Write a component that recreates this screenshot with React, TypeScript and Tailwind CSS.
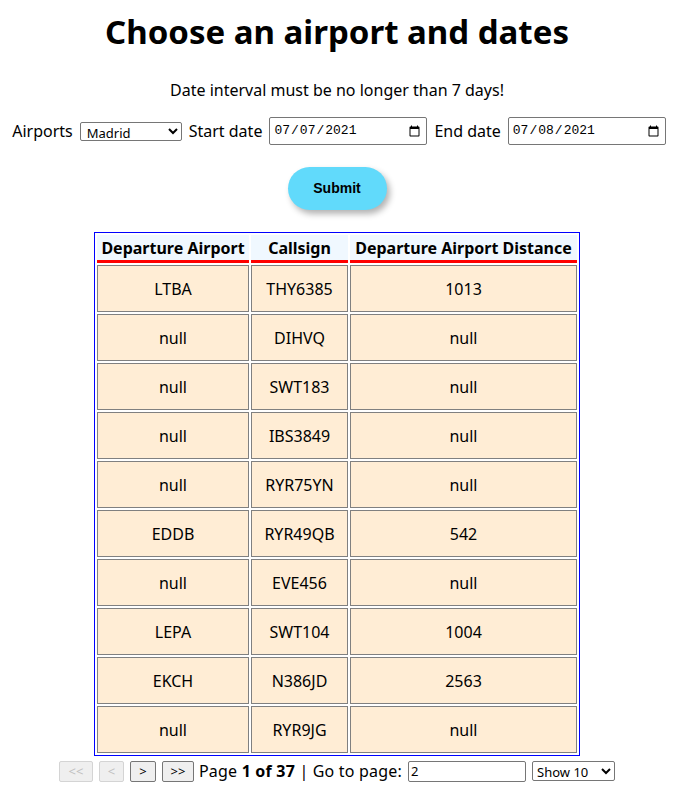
import React from "react";

const rows: [string, string, string][] = [
  ["LTBA", "THY6385", "1013"],
  ["null", "DIHVQ", "null"],
  ["null", "SWT183", "null"],
  ["null", "IBS3849", "null"],
  ["null", "RYR75YN", "null"],
  ["EDDB", "RYR49QB", "542"],
  ["null", "EVE456", "null"],
  ["LEPA", "SWT104", "1004"],
  ["EKCH", "N386JD", "2563"],
  ["null", "RYR9JG", "null"],
];

export default function App() {
  return (
    <div className="w-[698px] min-h-[807px] bg-white text-black text-[16px]" style={{ fontFamily: '"Noto Sans", sans-serif' }}>
      <h1 className="text-center font-bold text-[33px] leading-[38px] pt-[13px] pr-[24px]">Choose an airport and dates</h1>
      <p className="text-center text-[16px] leading-[20px] mt-[29px] pr-[24px]">Date interval must be no longer than 7 days!</p>
      <div className="flex items-center justify-center gap-[7px] mt-[17px] pr-[20px] h-[28px]">
        <span>Airports</span>
        <select className="w-[102px] h-[19px] border border-[#767676] rounded-[2px] text-[13px] pl-[2px] bg-white" style={{ fontFamily: '"Noto Sans", sans-serif' }} defaultValue="Madrid">
          <option>Madrid</option>
        </select>
        <span>Start date</span>
        <input type="date" defaultValue="2021-07-07" className="w-[158px] h-[28px] border border-[#767676] rounded-[2px] text-[13px] px-[3px]" style={{ fontFamily: '"Liberation Mono", monospace' }} />
        <span>End date</span>
        <input type="date" defaultValue="2021-07-08" className="w-[158px] h-[28px] border border-[#767676] rounded-[2px] text-[13px] px-[3px]" style={{ fontFamily: '"Liberation Mono", monospace' }} />
      </div>
      <div className="flex justify-center mt-[22px] pr-[24px]">
        <button className="w-[99px] h-[43px] rounded-full bg-[#61dafb] font-bold text-[14px] shadow-[3px_4px_6px_rgba(0,0,0,0.3)]" style={{ fontFamily: '"Liberation Sans", Arial, sans-serif' }}>Submit</button>
      </div>
      <div className="flex justify-center mt-[22px] pr-[24px]">
        <table className="border border-separate border-spacing-[2px] bg-white" style={{ borderColor: "blue" }}>
          <thead>
            <tr>
              <th className="w-[152px] h-[28px] bg-[#f0f8ff] border-b-[3px] font-bold text-[16px] leading-[20px] p-0" style={{ borderBottomColor: "red" }}>Departure Airport</th>
              <th className="w-[97px] h-[28px] bg-[#f0f8ff] border-b-[3px] font-bold text-[16px] leading-[20px] p-0" style={{ borderBottomColor: "red" }}>Callsign</th>
              <th className="w-[227px] h-[28px] bg-[#f0f8ff] border-b-[3px] font-bold text-[16px] leading-[20px] p-0" style={{ borderBottomColor: "red" }}>Departure Airport Distance</th>
            </tr>
          </thead>
          <tbody>
            {rows.map((r, i) => (
              <tr key={i}>
                {r.map((c, j) => (
                  <td key={j} className="h-[47px] bg-[#ffedd5] border border-[#808080] text-center p-0 text-[16px]">{c}</td>
                ))}
              </tr>
            ))}
          </tbody>
        </table>
      </div>
      <div className="flex items-center justify-center gap-[6px] mt-[3px] pr-[24px] text-[16px]">
        <button disabled className="w-[34px] h-[21px] border border-[#d4d4d4] rounded-[2px] bg-[#efefef] text-[#c0c0c0] text-[13px] leading-none">&lt;&lt;</button>
        <button disabled className="w-[25px] h-[21px] border border-[#d4d4d4] rounded-[2px] bg-[#efefef] text-[#c0c0c0] text-[13px] leading-none">&lt;</button>
        <button className="w-[26px] h-[21px] border border-[#767676] rounded-[2px] bg-[#efefef] text-[13px] leading-none">&gt;</button>
        <button className="w-[32px] h-[21px] border border-[#767676] rounded-[2px] bg-[#efefef] text-[13px] leading-none">&gt;&gt;</button>
        <span className="ml-[-1px] tracking-[0.2px]">Page <b>1 of 37</b> | Go to page: </span>
        <input type="number" defaultValue={2} className="w-[118px] h-[21px] border border-[#767676] rounded-[2px] px-[2px] text-[13px]" />
        <select className="w-[83px] h-[20px] border border-[#767676] rounded-[2px] text-[13px] bg-white" defaultValue="10">
          <option value="10">Show 10</option>
        </select>
      </div>
    </div>
  );
}
